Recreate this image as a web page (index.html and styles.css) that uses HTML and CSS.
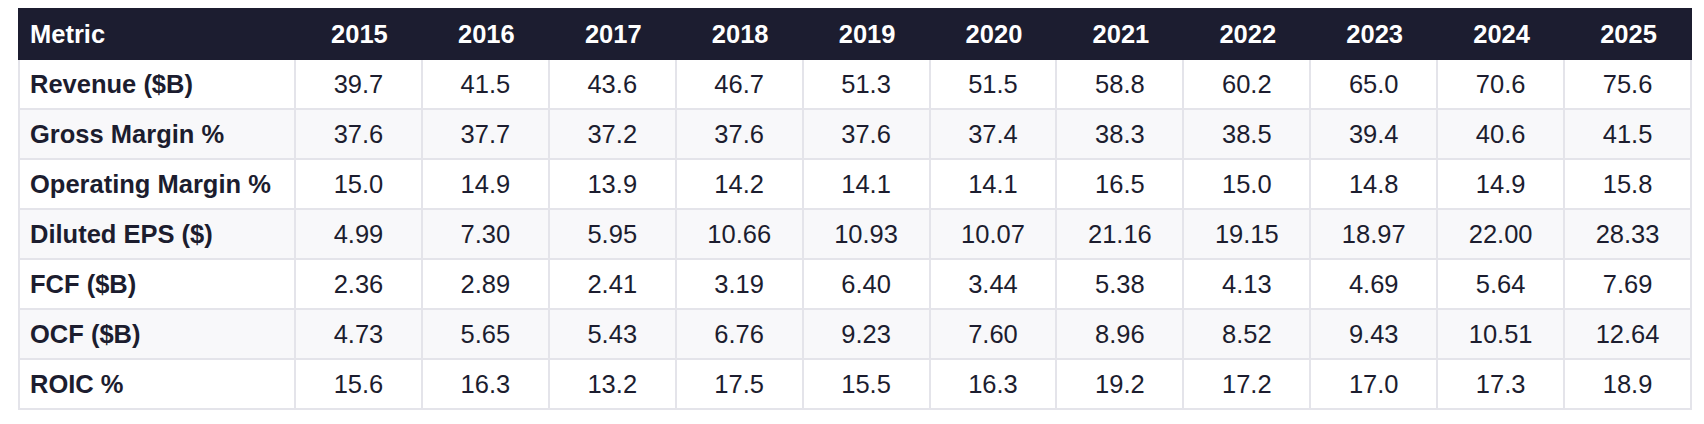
FILE: index.html
```html
<!DOCTYPE html>
<html lang="en">
<head>
<meta charset="utf-8">
<title>Financial Metrics</title>
<link rel="stylesheet" href="styles.css">
</head>
<body>
<div class="wrap">
<table class="metrics">
  <colgroup>
    <col class="col-metric">
    <col span="11">
  </colgroup>
  <thead>
    <tr>
      <th class="label">Metric</th>
      <th>2015</th><th>2016</th><th>2017</th><th>2018</th><th>2019</th><th>2020</th><th>2021</th><th>2022</th><th>2023</th><th>2024</th><th>2025</th>
    </tr>
  </thead>
  <tbody>
    <tr>
      <td class="label">Revenue ($B)</td>
      <td>39.7</td><td>41.5</td><td>43.6</td><td>46.7</td><td>51.3</td><td>51.5</td><td>58.8</td><td>60.2</td><td>65.0</td><td>70.6</td><td>75.6</td>
    </tr>
    <tr>
      <td class="label">Gross Margin %</td>
      <td>37.6</td><td>37.7</td><td>37.2</td><td>37.6</td><td>37.6</td><td>37.4</td><td>38.3</td><td>38.5</td><td>39.4</td><td>40.6</td><td>41.5</td>
    </tr>
    <tr>
      <td class="label">Operating Margin %</td>
      <td>15.0</td><td>14.9</td><td>13.9</td><td>14.2</td><td>14.1</td><td>14.1</td><td>16.5</td><td>15.0</td><td>14.8</td><td>14.9</td><td>15.8</td>
    </tr>
    <tr>
      <td class="label">Diluted EPS ($)</td>
      <td>4.99</td><td>7.30</td><td>5.95</td><td>10.66</td><td>10.93</td><td>10.07</td><td>21.16</td><td>19.15</td><td>18.97</td><td>22.00</td><td>28.33</td>
    </tr>
    <tr>
      <td class="label">FCF ($B)</td>
      <td>2.36</td><td>2.89</td><td>2.41</td><td>3.19</td><td>6.40</td><td>3.44</td><td>5.38</td><td>4.13</td><td>4.69</td><td>5.64</td><td>7.69</td>
    </tr>
    <tr>
      <td class="label">OCF ($B)</td>
      <td>4.73</td><td>5.65</td><td>5.43</td><td>6.76</td><td>9.23</td><td>7.60</td><td>8.96</td><td>8.52</td><td>9.43</td><td>10.51</td><td>12.64</td>
    </tr>
    <tr>
      <td class="label">ROIC %</td>
      <td>15.6</td><td>16.3</td><td>13.2</td><td>17.5</td><td>15.5</td><td>16.3</td><td>19.2</td><td>17.2</td><td>17.0</td><td>17.3</td><td>18.9</td>
    </tr>
  </tbody>
</table>
</div>
</body>
</html>
```

FILE: styles.css
```css
html, body {
  background: #ffffff;
}

body {
  margin: 8px;
  font-family: "Liberation Sans", Arial, Helvetica, sans-serif;
  color: #1c1d2f;
}

.wrap {
  padding-left: 10px;
}

.metrics {
  width: 1674px;
  table-layout: fixed;
  border-collapse: separate;
  border-spacing: 0;
  font-size: 25.5px;
  line-height: 28px;
}

.col-metric {
  width: 278px;
}

.metrics th {
  background: #1c1d30;
  color: #ffffff;
  font-weight: 700;
  text-align: center;
  padding: 12px 12px;
  white-space: nowrap;
}

.metrics th.label {
  text-align: left;
}

.metrics td {
  text-align: center;
  padding: 10px 10px;
  border-right: 2px solid #e4e4ea;
  border-bottom: 2px solid #e4e4ea;
  white-space: nowrap;
  background: #ffffff;
}

.metrics td.label {
  text-align: left;
  font-weight: 700;
  border-left: 2px solid #e4e4ea;
}

.metrics tbody tr:nth-child(even) td {
  background: #f8f8fa;
}
```
